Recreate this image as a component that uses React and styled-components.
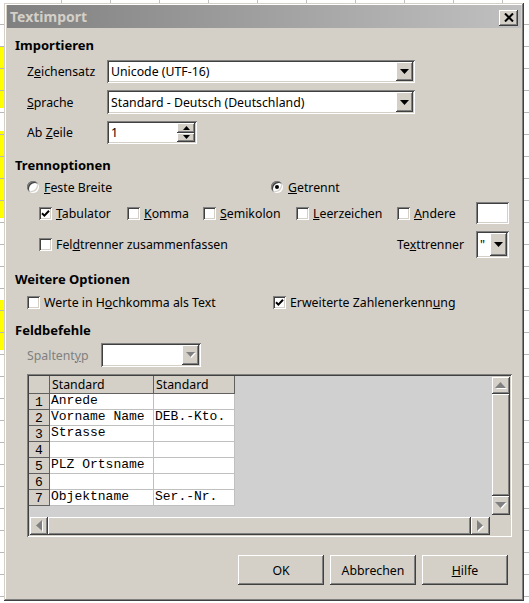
import React from "react";
import styled, { createGlobalStyle, css } from "styled-components";

const FACE = "#d4d0c8";
const UI_FONT = `"Noto Sans", "DejaVu Sans", sans-serif`;
const MONO_FONT = `"Liberation Mono", "DejaVu Sans Mono", monospace`;

const GlobalStyle = createGlobalStyle`
  html, body { margin: 0; padding: 0; }
  body {
    width: 529px;
    height: 603px;
    overflow: hidden;
    font-family: ${UI_FONT};
    font-size: 12.3px;
    color: #000;
  }
`;

/* classic 3D edges */
const raised = css`
  box-shadow: inset -1px -1px #404040, inset 1px 1px #ffffff,
    inset -2px -2px #808080, inset 2px 2px ${FACE};
`;
const sunken = css`
  box-shadow: inset 1px 1px #808080, inset -1px -1px #ffffff,
    inset 2px 2px #404040, inset -2px -2px ${FACE};
`;

/* spreadsheet peeking out behind the dialog */
const Desktop = styled.div`
  width: 529px;
  height: 603px;
  box-sizing: border-box;
  padding: 3px 5px 2px 4px;
  background-color: #fff;
  background-image: repeating-linear-gradient(
      to bottom,
      transparent 0 21px,
      #b8b8b8 21px 22px
    ),
    repeating-linear-gradient(to right, transparent 0 48px, #c0c0c0 48px 49px),
    linear-gradient(#ffff00, #ffff00), linear-gradient(#ffff00, #ffff00),
    linear-gradient(#ffff00, #ffff00);
  background-size: 100% 100%, 100% 3px, 4px 61px, 4px 87px, 4px 50px;
  background-position: 0 3px, 13px 0, 0 47px, 0 131px, 0 300px;
  background-repeat: repeat, no-repeat, no-repeat, no-repeat, no-repeat;
`;

const Dialog = styled.div`
  width: 520px;
  height: 598px;
  box-sizing: border-box;
  padding: 2px 3px 3px 3px;
  background: ${FACE};
  box-shadow: inset -1px -1px #404040, inset 1px 1px ${FACE},
    inset -2px -2px #808080, inset 2px 2px #ffffff;
  display: flex;
  flex-direction: column;
`;

const TitleBar = styled.div`
  height: 23px;
  flex: none;
  display: flex;
  align-items: center;
  justify-content: space-between;
  padding: 0 3px;
  background: linear-gradient(to right, #808080, #c0c0c0);
`;

const Title = styled.span`
  font-family: ${UI_FONT};
  font-weight: 700;
  font-size: 14px;
  color: ${FACE};
`;

const CloseButton = styled.div`
  width: 19px;
  height: 16px;
  margin-top: 2px;
  background: ${FACE};
  ${raised};
  display: flex;
  align-items: center;
  justify-content: center;
`;

const Body = styled.div`
  flex: 1;
  display: flex;
  flex-direction: column;
  padding: 0 13px 0 8px;
`;

const Heading = styled.div`
  height: 16px;
  line-height: 16px;
  margin-top: ${(p) => p.$mt}px;
  font-weight: 700;
  font-size: 13px;
`;

const Row = styled.div`
  display: flex;
  align-items: center;
  height: ${(p) => p.$h}px;
  margin-top: ${(p) => p.$mt}px;
  padding-left: ${(p) => p.$indent || 0}px;
`;

const Label = styled.span`
  width: ${(p) => p.$w}px;
  flex: none;
  white-space: nowrap;
  color: ${(p) => (p.$disabled ? "#808080" : "#000")};
`;

const Field = styled.div`
  width: ${(p) => p.$w}px;
  height: 100%;
  flex: none;
  box-sizing: border-box;
  padding: 2px;
  background: #fff;
  ${sunken};
  display: flex;
  align-items: stretch;
`;

const FieldText = styled.span`
  flex: 1;
  display: flex;
  align-items: center;
  padding-left: 2px;
  white-space: nowrap;
  overflow: hidden;
`;

const ArrowButton = styled.div`
  width: ${(p) => p.$w || 17}px;
  flex: none;
  background: ${FACE};
  ${raised};
  display: flex;
  align-items: center;
  justify-content: center;
`;

const SpinColumn = styled.div`
  width: 18px;
  flex: none;
  display: flex;
  flex-direction: column;
`;

const SpinButton = styled.div`
  flex: 1;
  background: ${FACE};
  ${raised};
  display: flex;
  align-items: center;
  justify-content: center;
`;

const Option = styled.label`
  width: ${(p) => (p.$w ? `${p.$w}px` : "auto")};
  flex: none;
  display: flex;
  align-items: center;
  gap: ${(p) => p.$gap || 4}px;
  white-space: nowrap;
`;

const Box = styled.span`
  width: 13px;
  height: 13px;
  flex: none;
  box-sizing: border-box;
  background: #fff;
  ${sunken};
  display: flex;
  align-items: center;
  justify-content: center;
`;

const Radio = styled.span`
  width: 12px;
  height: 12px;
  flex: none;
  border-radius: 50%;
  background: #fff;
  box-shadow: inset 1px 1px #808080, inset -1px -1px #ffffff,
    inset 2px 2px #404040, inset -2px -2px ${FACE};
  display: flex;
  align-items: center;
  justify-content: center;
`;

const Dot = styled.span`
  width: 4px;
  height: 4px;
  border-radius: 50%;
  background: #000;
`;

/* column preview */
const GridBox = styled.div`
  margin: 7px 0 0 12px;
  width: 485px;
  height: 163px;
  flex: none;
  box-sizing: border-box;
  padding: 2px;
  background: ${FACE};
  ${sunken};
  display: grid;
  grid-template-columns: 1fr 18px;
  grid-template-rows: 1fr 18px;
`;

const Sheet = styled.div`
  background: #d0d0d0;
  overflow: hidden;
`;

const Table = styled.div`
  display: grid;
  grid-template-columns: 21px 104px 81px;
  grid-template-rows: 18px repeat(7, 16px);
  width: max-content;
`;

const Cell = styled.div`
  box-sizing: border-box;
  border-right: 1px solid ${(p) => (p.$frame ? "#606060" : "#c0c0c0")};
  border-bottom: 1px solid ${(p) => (p.$frame ? "#606060" : "#c0c0c0")};
  background: ${(p) => (p.$frame ? FACE : "#fff")};
  font-family: ${MONO_FONT};
  font-size: 13px;
  line-height: 14px;
  padding-left: 1px;
  white-space: pre;
  overflow: hidden;
`;

const HeadCell = styled(Cell)`
  font-family: ${UI_FONT};
  font-size: 12.3px;
  line-height: 17px;
  padding-left: 2px;
`;

const NumCell = styled(Cell)`
  padding: 2px 0 0 0;
  text-align: center;
`;

const VScroll = styled.div`
  display: flex;
  flex-direction: column;
  padding: 1px 0 2px;
`;

const HScroll = styled.div`
  display: flex;
  padding: 0 2px 0 1px;
`;

const ScrollButton = styled.div`
  flex: none;
  width: ${(p) => p.$w}px;
  height: ${(p) => p.$h}px;
  background: ${FACE};
  ${raised};
  display: flex;
  align-items: center;
  justify-content: center;
`;

const Thumb = styled.div`
  flex: 1;
  background: ${FACE};
  ${raised};
`;

const ButtonRow = styled.div`
  margin-top: 18px;
  display: flex;
  justify-content: flex-end;
  gap: 6px;
`;

const PushButton = styled.button`
  width: 86px;
  height: 30px;
  padding: 0;
  border: 0;
  background: ${FACE};
  ${raised};
  font-family: ${UI_FONT};
  font-size: 12.3px;
  color: #000;
`;

function Arrow({ dir = "down", size = 9, color = "#000", emboss = false }) {
  const b = size;
  const d = Math.ceil(size / 2);
  const vertical = dir === "up" || dir === "down";
  const w = vertical ? b : d;
  const h = vertical ? d : b;
  const pts = {
    down: `0,0 ${b},0 ${b / 2},${d}`,
    up: `0,${d} ${b},${d} ${b / 2},0`,
    right: `0,0 0,${b} ${d},${b / 2}`,
    left: `${d},0 ${d},${b} 0,${b / 2}`,
  }[dir];
  const e = emboss ? 1 : 0;
  return (
    <svg width={w + e} height={h + e} viewBox={`0 0 ${w + e} ${h + e}`}>
      {emboss && <polygon points={pts} fill="#fff" transform="translate(1 1)" />}
      <polygon points={pts} fill={color} />
    </svg>
  );
}

const CheckMark = () => (
  <svg width="9" height="9" viewBox="0 0 9 9">
    <path d="M1 4.2 L3.4 6.6 L8 1.8" fill="none" stroke="#000" strokeWidth="2" />
  </svg>
);

function Check({ checked, w, children }) {
  return (
    <Option $w={w}>
      <Box>{checked && <CheckMark />}</Box>
      <span>{children}</span>
    </Option>
  );
}

function Combo({ w, text, disabled }) {
  return (
    <Field $w={w}>
      <FieldText>{text}</FieldText>
      <ArrowButton>
        <Arrow dir="down" size={9} color={disabled ? "#808080" : "#000"} emboss={disabled} />
      </ArrowButton>
    </Field>
  );
}

const rows = [
  ["Anrede", ""],
  ["Vorname Name", "DEB.-Kto."],
  ["Strasse", ""],
  ["", ""],
  ["PLZ Ortsname", ""],
  ["", ""],
  ["Objektname", "Ser.-Nr."],
];

export default function App() {
  return (
    <>
      <GlobalStyle />
      <Desktop>
        <Dialog>
          <TitleBar>
            <Title>Textimport</Title>
            <CloseButton>
              <svg width="10" height="9" viewBox="0 0 10 9">
                <path d="M1 0.5 L9 8.5 M9 0.5 L1 8.5" stroke="#000" strokeWidth="2" />
              </svg>
            </CloseButton>
          </TitleBar>

          <Body>
            <Heading $mt={9}>Importieren</Heading>
            <Row $mt={7} $h={23} $indent={12}>
              <Label $w={80}>
                Z<u>e</u>ichensatz
              </Label>
              <Combo w={308} text="Unicode (UTF-16)" />
            </Row>
            <Row $mt={7} $h={24} $indent={12}>
              <Label $w={80}>
                <u>S</u>prache
              </Label>
              <Combo w={308} text="Standard - Deutsch (Deutschland)" />
            </Row>
            <Row $mt={7} $h={23} $indent={12}>
              <Label $w={80}>
                Ab <u>Z</u>eile
              </Label>
              <Field $w={90}>
                <FieldText>1</FieldText>
                <SpinColumn>
                  <SpinButton>
                    <Arrow dir="up" size={7} />
                  </SpinButton>
                  <SpinButton>
                    <Arrow dir="down" size={7} />
                  </SpinButton>
                </SpinColumn>
              </Field>
            </Row>

            <Heading $mt={13}>Trennoptionen</Heading>
            <Row $mt={6} $h={16} $indent={12}>
              <Option $w={244} $gap={5}>
                <Radio />
                <span>
                  <u>F</u>este Breite
                </span>
              </Option>
              <Option $gap={5}>
                <Radio>
                  <Dot />
                </Radio>
                <span>
                  <u>G</u>etrennt
                </span>
              </Option>
            </Row>
            <Row $mt={7} $h={22} $indent={24}>
              <Check checked w={88}>
                <u>T</u>abulator
              </Check>
              <Check w={76}>
                <u>K</u>omma
              </Check>
              <Check w={93}>
                <u>S</u>emikolon
              </Check>
              <Check w={101}>
                <u>L</u>eerzeichen
              </Check>
              <Check w={79}>
                <u>A</u>ndere
              </Check>
              <Field $w={33} />
            </Row>
            <Row $mt={7} $h={27} $indent={24}>
              <Check w={358}>
                Fel<u>d</u>trenner zusammenfassen
              </Check>
              <Label $w={79}>
                Te<u>x</u>ttrenner
              </Label>
              <Field $w={33}>
                <FieldText>"</FieldText>
                <ArrowButton>
                  <Arrow dir="down" size={9} />
                </ArrowButton>
              </Field>
            </Row>

            <Heading $mt={13}>Weitere Optionen</Heading>
            <Row $mt={7} $h={16} $indent={12}>
              <Check w={246}>
                Werte in H<u>o</u>chkomma als Text
              </Check>
              <Check checked>
                Erweiterte Zahlenerkenn<u>u</u>ng
              </Check>
            </Row>

            <Heading $mt={12}>Feldbefehle</Heading>
            <Row $mt={5} $h={24} $indent={12}>
              <Label $w={74} $disabled>
                Spaltent<u>y</u>p
              </Label>
              <Combo w={100} text="" disabled />
            </Row>

            <GridBox>
              <Sheet>
                <Table>
                  <Cell $frame />
                  <HeadCell $frame>Standard</HeadCell>
                  <HeadCell $frame>Standard</HeadCell>
                  {rows.map(([a, b], i) => (
                    <React.Fragment key={i}>
                      <NumCell $frame>{i + 1}</NumCell>
                      <Cell>{a}</Cell>
                      <Cell>{b}</Cell>
                    </React.Fragment>
                  ))}
                </Table>
              </Sheet>
              <VScroll>
                <ScrollButton $w={18} $h={17}>
                  <Arrow dir="up" size={11} color="#808080" emboss />
                </ScrollButton>
                <Thumb />
                <ScrollButton $w={18} $h={19}>
                  <Arrow dir="down" size={11} color="#808080" emboss />
                </ScrollButton>
              </VScroll>
              <HScroll>
                <ScrollButton $w={18} $h={18}>
                  <Arrow dir="left" size={11} color="#808080" emboss />
                </ScrollButton>
                <Thumb />
                <ScrollButton $w={19} $h={18}>
                  <Arrow dir="right" size={11} color="#808080" emboss />
                </ScrollButton>
              </HScroll>
              <div />
            </GridBox>

            <ButtonRow>
              <PushButton>OK</PushButton>
              <PushButton>Abbrechen</PushButton>
              <PushButton>
                <u>H</u>ilfe
              </PushButton>
            </ButtonRow>
          </Body>
        </Dialog>
      </Desktop>
    </>
  );
}
